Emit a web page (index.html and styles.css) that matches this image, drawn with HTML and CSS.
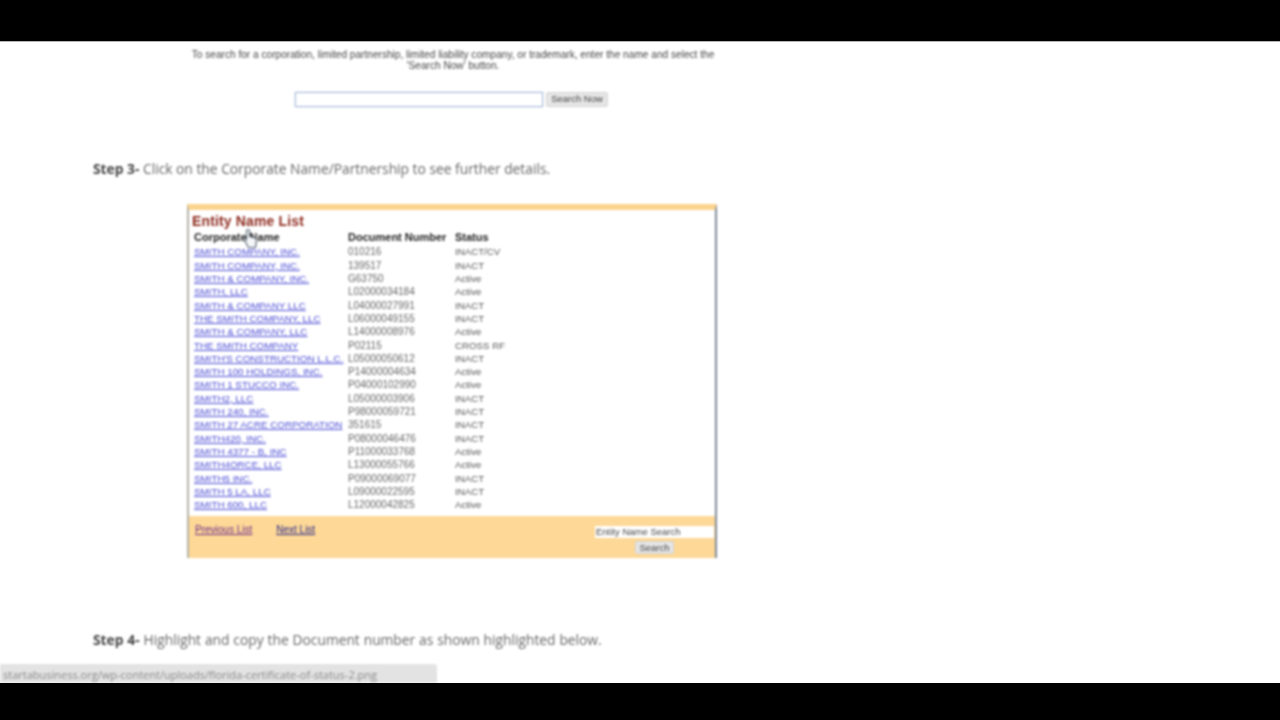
FILE: index.html
```html
<!DOCTYPE html>
<html lang="en">
<head>
    <meta charset="UTF-8">
    <meta name="viewport" content="width=device-width, initial-scale=1.0">
    <title>Florida Certificate of Status</title>
    <link rel="stylesheet" href="styles.css">
</head>
<body>
    <div class="video">
        <div class="letterbox-top"></div>

        <div class="page">
            <div class="article">
                <div class="search-shot">
                    <p class="search-intro">To search for a corporation, limited partnership, limited liability company, or trademark, enter the name and select the<br>'Search Now' button.</p>
                    <div class="search-row">
                        <div class="search-input"></div>
                        <div class="shot-button search-now">Search Now</div>
                    </div>
                </div>

                <p class="step step-3"><b>Step 3-</b> Click on the Corporate Name/Partnership to see further details.</p>

                <div class="entity-shot">
                    <div class="entity-body">
                        <h2>Entity Name List</h2>
                        <div class="entity-row entity-head">
                            <span>Corporate Name</span>
                            <span>Document Number</span>
                            <span>Status</span>
                        </div>
                        <div class="entity-row"><a>SMITH COMPANY, INC.</a><span>010216</span><span>INACT/CV</span></div>
                        <div class="entity-row"><a>SMITH COMPANY, INC.</a><span>139517</span><span>INACT</span></div>
                        <div class="entity-row"><a>SMITH &amp; COMPANY, INC.</a><span>G63750</span><span>Active</span></div>
                        <div class="entity-row"><a>SMITH, LLC</a><span>L02000034184</span><span>Active</span></div>
                        <div class="entity-row"><a>SMITH &amp; COMPANY LLC</a><span>L04000027991</span><span>INACT</span></div>
                        <div class="entity-row"><a>THE SMITH COMPANY, LLC</a><span>L06000049155</span><span>INACT</span></div>
                        <div class="entity-row"><a>SMITH &amp; COMPANY, LLC</a><span>L14000008976</span><span>Active</span></div>
                        <div class="entity-row"><a>THE SMITH COMPANY</a><span>P02115</span><span>CROSS RF</span></div>
                        <div class="entity-row"><a>SMITH'S CONSTRUCTION L.L.C.</a><span>L05000050612</span><span>INACT</span></div>
                        <div class="entity-row"><a>SMITH 100 HOLDINGS, INC.</a><span>P14000004634</span><span>Active</span></div>
                        <div class="entity-row"><a>SMITH 1 STUCCO INC.</a><span>P04000102990</span><span>Active</span></div>
                        <div class="entity-row"><a>SMITH2, LLC</a><span>L05000003906</span><span>INACT</span></div>
                        <div class="entity-row"><a>SMITH 240, INC.</a><span>P98000059721</span><span>INACT</span></div>
                        <div class="entity-row"><a>SMITH 27 ACRE CORPORATION</a><span>351615</span><span>INACT</span></div>
                        <div class="entity-row"><a>SMITH420, INC.</a><span>P08000046476</span><span>INACT</span></div>
                        <div class="entity-row"><a>SMITH 4377 - B, INC</a><span>P11000033768</span><span>Active</span></div>
                        <div class="entity-row"><a>SMITH4ORCE, LLC</a><span>L13000055766</span><span>Active</span></div>
                        <div class="entity-row"><a>SMITH5 INC.</a><span>P09000069077</span><span>INACT</span></div>
                        <div class="entity-row"><a>SMITH 5 LA, LLC</a><span>L09000022595</span><span>INACT</span></div>
                        <div class="entity-row"><a>SMITH 600, LLC</a><span>L12000042825</span><span>Active</span></div>
                    </div>
                    <div class="entity-foot">
                        <div class="foot-links">
                            <a class="prev-link">Previous List</a>
                            <a class="next-link">Next List</a>
                        </div>
                        <div class="foot-search">
                            <div class="foot-input">Entity Name Search</div>
                            <div class="shot-button foot-button">Search</div>
                        </div>
                    </div>
                    <!-- mouse pointer over the header -->
                    <svg class="cursor" width="16" height="22" viewBox="0 0 16 22">
                        <path d="M5 1.500c1 0 1.600.7 1.600 1.600v5.400l5.200 1.300c1.200.3 1.900 1.200 1.700 2.400l-.9 7.300H5.400L1.500 12.200c-.6-.8.3-2 1.300-1.400l.7.700V3.100C3.500 2.200 4.100 1.500 5 1.500z" fill="#f4f6f8" stroke="#5f6a78" stroke-width="1.200"/>
                    </svg>
                </div>

                <p class="step step-4"><b>Step 4-</b> Highlight and copy the Document number as shown highlighted below.</p>
            </div>

            <div class="status-bubble">startabusiness.org/wp-content/uploads/florida-certificate-of-status-2.png</div>
        </div>

        <div class="letterbox-bottom"></div>
    </div>
</body>
</html>
```

FILE: styles.css
```css
html, body {
    margin: 0;
    height: 100%;
    background: #000;
}

.video {
    display: flex;
    flex-direction: column;
    width: 1280px;
    height: 720px;
    overflow: hidden;
}

.letterbox-top {
    height: 41px;
    background: #000;
}

.letterbox-bottom {
    height: 37px;
    background: #000;
}

.page {
    position: relative;
    flex: 1;
    overflow: hidden;
    background: #fff;
    border-top: 1px solid #b5b5b5;
}

.article {
    padding-left: 93px;
    filter: blur(0.8px);
}

/* first embedded screenshot */
.search-shot {
    width: 720px;
}

.search-intro {
    width: 540px;
    margin: 7px 0 0 90px;
    font: 10.15px/11px "Liberation Sans", Arial, sans-serif;
    color: #444;
    text-align: center;
    white-space: nowrap;
}

.search-row {
    display: flex;
    gap: 3px;
    margin: 21px 0 0 202px;
}

.search-input {
    width: 246px;
    height: 13px;
    background: #fff;
    border: 1px solid #a9bbd8;
    box-shadow: 0 0 1px #8fa8d0;
}

.shot-button {
    background: #e6e6e6;
    border: 1px solid #d4d4d4;
    border-radius: 2px;
    font: 9.5px/12px "Liberation Sans", Arial, sans-serif;
    color: #444;
    text-align: center;
}

.search-now {
    width: 60px;
    height: 13px;
}

.step {
    margin: 0;
    font: 13.8px/20px "Open Sans", sans-serif;
    color: #666;
    white-space: nowrap;
}

.step b {
    color: #444;
}

.step-3 {
    margin-top: 52px;
}

.step-4 {
    margin-top: 72px;
    word-spacing: 0.3px;
}

/* entity list screenshot */
.entity-shot {
    position: relative;
    width: 526px;
    margin: 25px 0 0 94px;
    border-left: 2px solid #b4b2a8;
    border-right: 2px solid #7f8a99;
    border-top: 6px solid #fbd38e;
    font: 10px/13.32px "Liberation Sans", Arial, sans-serif;
    color: #666;
}

.entity-body {
    height: 303px;
    padding: 3px 0 0 3px;
    background: #fff;
}

.entity-body h2 {
    margin: 0;
    font: bold 13.9px/16px "Liberation Sans", Arial, sans-serif;
    color: #8e2b1f;
    letter-spacing: 0.2px;
}

.entity-row {
    display: grid;
    grid-template-columns: 154px 107px 1fr;
    padding-left: 2px;
    height: 13.32px;
    white-space: nowrap;
}

.entity-row a {
    font-size: 9.8px;
    color: #4a4ad6;
    text-decoration: underline;
}

.entity-row span:last-child {
    font-size: 9.7px;
    color: #555;
}

.entity-head {
    margin: 2px 0 1px;
    font-weight: bold;
    font-size: 11px;
    color: #222;
}

.entity-head span:last-child {
    font-size: 11px;
    color: #222;
}

.entity-foot {
    display: flex;
    justify-content: space-between;
    height: 42px;
    background: #fdd896;
}

.foot-links {
    display: flex;
    gap: 24px;
    padding: 7px 0 0 6px;
}

.prev-link {
    color: #6a2a8c;
    text-decoration: underline;
}

.next-link {
    color: #27278c;
    text-decoration: underline;
}

.foot-search {
    display: flex;
    flex-direction: column;
    align-items: center;
    width: 119px;
    margin-right: 1px;
    padding-top: 10px;
}

.foot-input {
    align-self: stretch;
    height: 12px;
    padding-left: 1px;
    background: #fff;
    font-size: 9.5px;
    line-height: 12px;
    color: #444;
}

.foot-button {
    width: 37px;
    height: 11px;
    margin-top: 3px;
    line-height: 11px;
}

.cursor {
    position: absolute;
    left: 54px;
    top: 18px;
}

/* browser link preview */
.status-bubble {
    position: absolute;
    left: 0;
    bottom: 0;
    width: 434px;
    height: 19px;
    padding-left: 3px;
    background: #e3e3e3;
    border-radius: 0 3px 0 0;
    font: 11px/21px "Open Sans", sans-serif;
    color: #888;
    filter: blur(0.8px);
    white-space: nowrap;
}
```
